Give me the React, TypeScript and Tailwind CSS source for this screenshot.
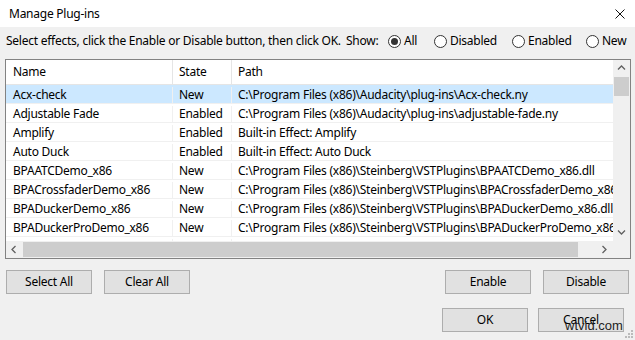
import type { FC } from "react";

const plugins = [
  { name: "Acx-check", state: "New", path: "C:\\Program Files (x86)\\Audacity\\plug-ins\\Acx-check.ny" },
  { name: "Adjustable Fade", state: "Enabled", path: "C:\\Program Files (x86)\\Audacity\\plug-ins\\adjustable-fade.ny" },
  { name: "Amplify", state: "Enabled", path: "Built-in Effect: Amplify" },
  { name: "Auto Duck", state: "Enabled", path: "Built-in Effect: Auto Duck" },
  { name: "BPAATCDemo_x86", state: "New", path: "C:\\Program Files (x86)\\Steinberg\\VSTPlugins\\BPAATCDemo_x86.dll" },
  { name: "BPACrossfaderDemo_x86", state: "New", path: "C:\\Program Files (x86)\\Steinberg\\VSTPlugins\\BPACrossfaderDemo_x86.dll" },
  { name: "BPADuckerDemo_x86", state: "New", path: "C:\\Program Files (x86)\\Steinberg\\VSTPlugins\\BPADuckerDemo_x86.dll" },
  { name: "BPADuckerProDemo_x86", state: "New", path: "C:\\Program Files (x86)\\Steinberg\\VSTPlugins\\BPADuckerProDemo_x86.dll" },
  { name: "", state: "", path: "" },
];

const Radio: FC<{ label: string; checked?: boolean; className?: string }> = ({ label, checked, className }) => (
  <div className={`flex items-center ${className ?? ""}`}>
    <span className="w-[13px] h-[13px] rounded-full border border-[#333] bg-white flex items-center justify-center">
      {checked && <span className="w-[7px] h-[7px] rounded-full bg-[#333]" />}
    </span>
    <span className="ml-[3px]">{label}</span>
  </div>
);

const Button: FC<{ label: string; className?: string }> = ({ label, className }) => (
  <div
    className={`h-[24px] w-[86px] bg-[#e1e1e1] border border-[#adadad] flex items-center justify-center ${className ?? ""}`}
  >
    {label}
  </div>
);

const Chevron: FC<{ dir: "up" | "down" | "left" | "right" }> = ({ dir }) => {
  const d = {
    up: "M1 5.5 L4.5 2 L8 5.5",
    down: "M1 2.5 L4.5 6 L8 2.5",
    left: "M5.5 1 L2 4.5 L5.5 8",
    right: "M2.5 1 L6 4.5 L2.5 8",
  }[dir];
  return (
    <svg width="9" height="9" viewBox="0 0 9 9">
      <path d={d} fill="none" stroke="#606060" strokeWidth="1.3" />
    </svg>
  );
};

const App: FC = () => {
  return (
    <div
      className="relative w-[635px] h-[340px] bg-[#f0f0f0] text-[12px] tracking-[-0.25px] text-black overflow-hidden"
      style={{ fontFamily: '"Segoe UI", "Noto Sans", sans-serif' }}
    >
      {/* title bar */}
      <div className="h-[27px] bg-white flex items-center justify-between pl-[9px] pr-[10px]">
        <span>Manage Plug-ins</span>
        <svg width="10" height="10" viewBox="0 0 10 10">
          <path d="M0.5 0.5 L9.5 9.5 M9.5 0.5 L0.5 9.5" stroke="#111" strokeWidth="1" />
        </svg>
      </div>

      {/* filter line */}
      <div className="h-[28px] flex items-center pl-[6px] whitespace-nowrap">
        <span className="w-[340px]">Select effects, click the Enable or Disable button, then click OK.</span>
        <span className="w-[42px]">Show:</span>
        <Radio label="All" checked className="w-[46px]" />
        <Radio label="Disabled" className="w-[78px]" />
        <Radio label="Enabled" className="w-[74px]" />
        <Radio label="New" />
      </div>

      {/* list */}
      <div className="mx-[5px] mt-[4px] h-[200px] w-[626px] border border-[#828282] bg-white grid grid-cols-[1fr_17px] grid-rows-[1fr_17px]">
        <div className="overflow-hidden whitespace-nowrap">
          <div className="flex h-[25px] items-center border-b border-[#e5e5e5]">
            <div className="w-[167px] h-full flex items-center pl-[7px] border-r border-[#e5e5e5]">Name</div>
            <div className="w-[59px] h-full flex items-center pl-[6px] border-r border-[#e5e5e5]">State</div>
            <div className="flex-1 h-full flex items-center pl-[6px]">Path</div>
          </div>
          {plugins.map((p, i) => (
            <div
              key={`${p.name}-${i}`}
              className={`flex h-[19px] items-center pt-[2px] border-b border-[#f0f0f0] ${i === 0 ? "bg-[#cce8ff]" : ""}`}
            >
              <div className="w-[167px] h-full flex items-center pl-[7px] border-r border-[#f0f0f0]">{p.name}</div>
              <div className="w-[59px] h-full flex items-center pl-[6px] border-r border-[#f0f0f0]">{p.state}</div>
              <div className="flex-1 h-full flex items-center pl-[6px] overflow-hidden">{p.path}</div>
            </div>
          ))}
        </div>

        {/* vertical scrollbar */}
        <div className="bg-[#f0f0f0] flex flex-col items-center">
          <div className="h-[17px] flex items-center justify-center">
            <Chevron dir="up" />
          </div>
          <div className="w-[15px] h-[19px] bg-[#cdcdcd]" />
          <div className="flex-1" />
          <div className="h-[17px] flex items-center justify-center">
            <Chevron dir="down" />
          </div>
        </div>

        {/* horizontal scrollbar */}
        <div className="bg-[#f0f0f0] flex items-center">
          <div className="w-[17px] h-full flex items-center justify-center">
            <Chevron dir="left" />
          </div>
          <div className="w-[555px] h-[15px] bg-[#cdcdcd]" />
          <div className="flex-1" />
          <div className="w-[17px] h-full flex items-center justify-center">
            <Chevron dir="right" />
          </div>
        </div>
        <div className="bg-[#f0f0f0]" />
      </div>

      {/* buttons */}
      <div className="flex mt-[11px] px-[6px]">
        <Button label="Select All" />
        <Button label="Clear All" className="ml-[12px]" />
        <div className="flex-1" />
        <Button label="Enable" />
        <Button label="Disable" className="ml-[12px]" />
      </div>
      <div className="flex justify-end mt-[14px] pr-[11px]">
        <Button label="OK" />
        <Button label="Cancel" className="ml-[10px]" />
      </div>

      {/* watermark */}
      <div
        className="absolute left-[565px] top-[319px] text-[13px] tracking-normal text-[#222] leading-none"
        style={{ fontFamily: '"Liberation Sans", Arial, sans-serif' }}
      >
        wtvid.com
      </div>
      {/* size grip */}
      <svg className="absolute right-[1px] bottom-[1px]" width="10" height="10" viewBox="0 0 10 10">
        <rect x="7" y="1" width="2" height="2" fill="#bbb" />
        <rect x="4" y="4" width="2" height="2" fill="#bbb" />
        <rect x="7" y="4" width="2" height="2" fill="#bbb" />
        <rect x="1" y="7" width="2" height="2" fill="#bbb" />
        <rect x="4" y="7" width="2" height="2" fill="#bbb" />
        <rect x="7" y="7" width="2" height="2" fill="#bbb" />
      </svg>
    </div>
  );
};

export default App;
